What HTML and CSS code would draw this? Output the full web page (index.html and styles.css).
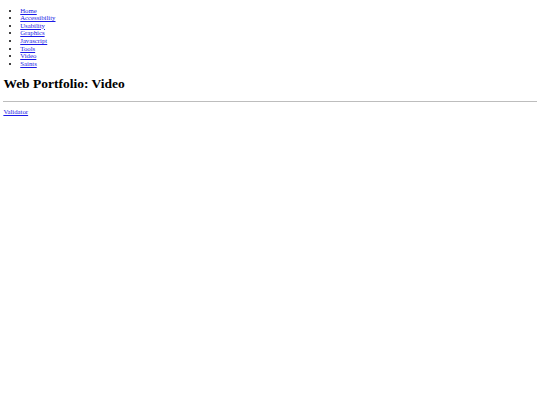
FILE: index.html
```html
<!DOCTYPE html>
<html>
<head>
<meta charset="utf-8">
<title>Web Portfolio: Video</title>
<link rel="stylesheet" href="styles.css">
</head>
<body>
<ul class="nav">
<li><a href="#">Home</a></li>
<li><a href="#">Accessibility</a></li>
<li><a href="#">Usability</a></li>
<li><a href="#">Graphics</a></li>
<li><a href="#">Javascript</a></li>
<li><a href="#">Tools</a></li>
<li><a href="#">Video</a></li>
<li><a href="#">Saints</a></li>
</ul>
<h1 class="title">Web Portfolio: Video</h1>
<hr class="rule">
<p class="footer"><a href="#">Validator</a></p>
</body>
</html>
```
FILE: styles.css
```css
html { background: #fff; }
body {
  margin: 3.375px;
  font-family: "Liberation Serif", "Times New Roman", serif;
  font-size: 6.75px;
  line-height: 7.55px;
  color: #000;
}
a { color: #1a1ae6; text-decoration: underline; }
.nav {
  margin: 3.4px 0 6.75px;
  padding-left: 16.875px;
  list-style: disc;
}
.title {
  font-size: 13.5px;
  line-height: 15.5px;
  font-weight: bold;
  margin: 9.05px 0;
}
.rule {
  margin: 0;
  border: none;
  border-top: 1px solid #bdbdbd;
  height: 0;
}
.footer {
  margin: 6.75px 0;
}
```
